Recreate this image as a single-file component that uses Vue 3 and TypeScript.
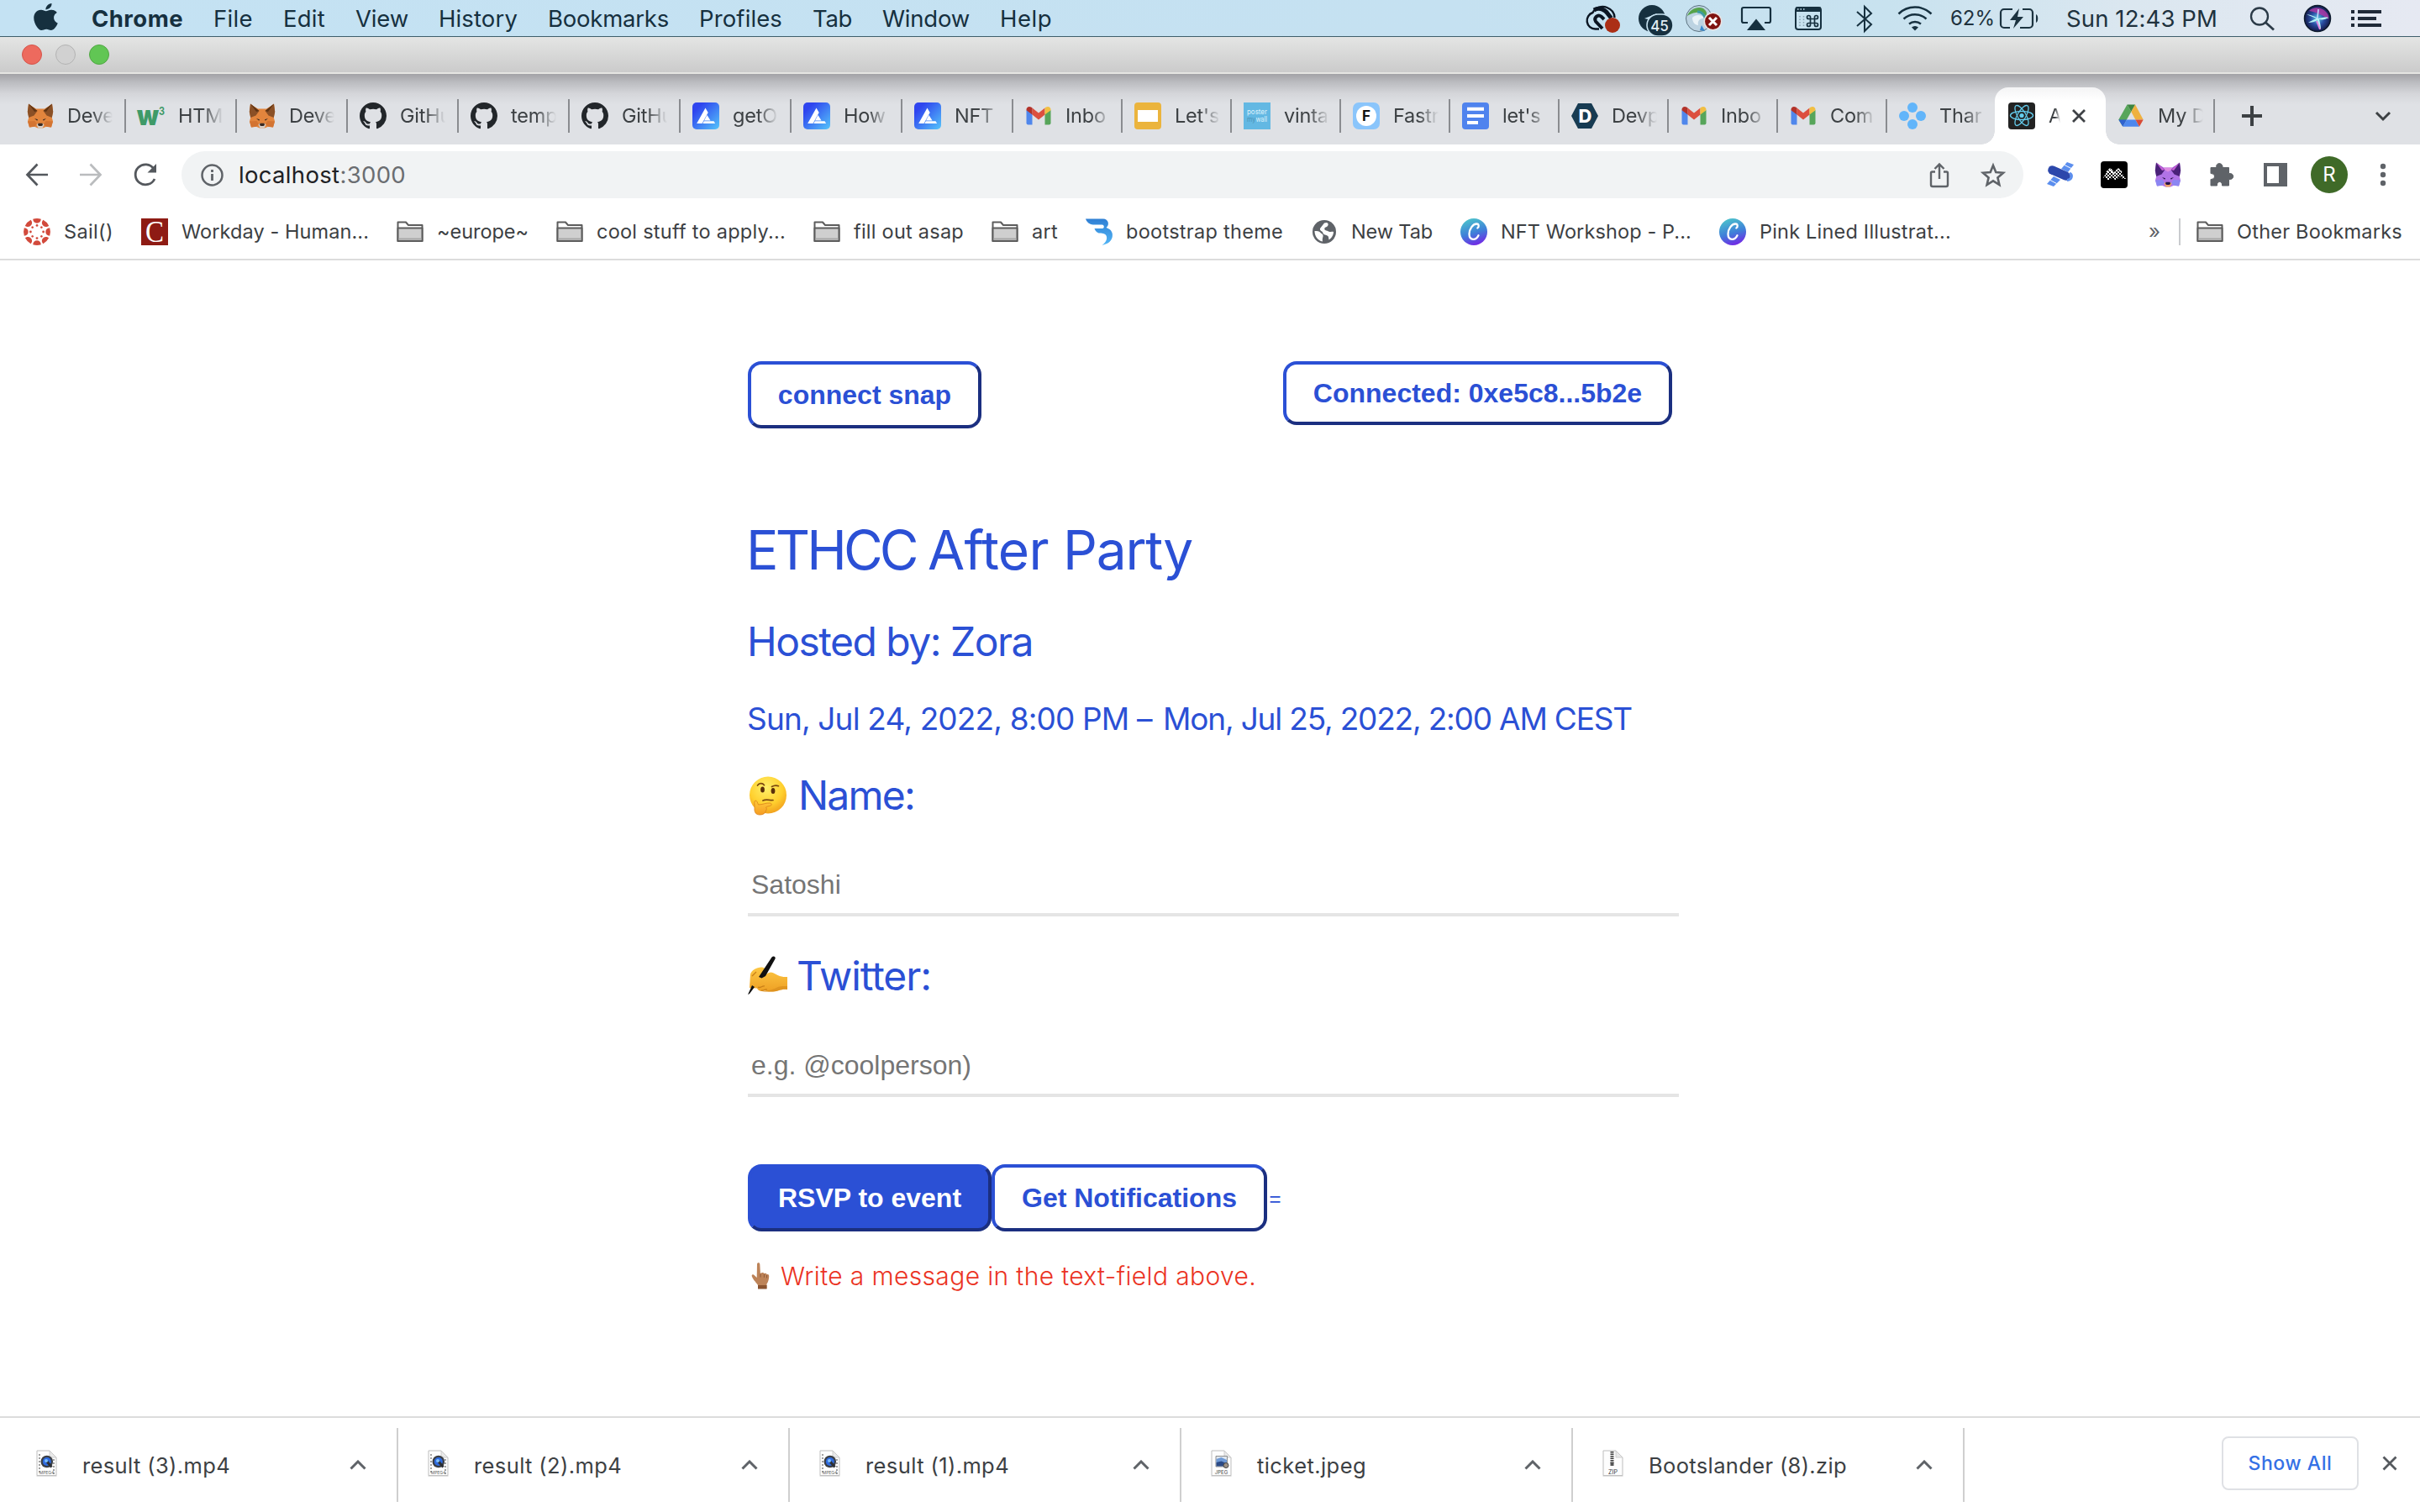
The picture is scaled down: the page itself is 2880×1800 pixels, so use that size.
<script setup lang="ts">
import type { Directive } from 'vue'

interface Tab { icon: string; title: string; kind?: 'narrow' | 'active' }
interface Label { text: string; width: number }
interface Bookmark extends Label { icon: string }
interface Download extends Label { icon: string }

/* Tracks a label so that its advance width equals the given number of pixels. */
const vFit: Directive<HTMLElement, number> = {
  mounted(el, binding) {
    const natural = el.getBoundingClientRect().width
    const count = (el.textContent ?? '').length
    el.style.letterSpacing = `${((binding.value - natural) / count).toFixed(3)}px`
  },
}

const mark = {
  github: 'M8 0C3.58 0 0 3.58 0 8c0 3.54 2.29 6.53 5.47 7.59.4.07.55-.17.55-.38 0-.19-.01-.82-.01-1.49-2.01.37-2.53-.49-2.69-.94-.09-.23-.48-.94-.82-1.13-.28-.15-.68-.52-.01-.53.63-.01 1.08.58 1.23.82.72 1.21 1.87.87 2.33.66.07-.52.28-.87.51-1.07-1.78-.2-3.64-.89-3.64-3.95 0-.87.31-1.59.82-2.15-.08-.2-.36-1.02.08-2.12 0 0 .67-.21 2.2.82.64-.18 1.32-.27 2-.27s1.36.09 2 .27c1.53-1.04 2.2-.82 2.2-.82.44 1.1.16 1.92.08 2.12.51.56.82 1.27.82 2.15 0 3.07-1.87 3.75-3.65 3.95.29.25.54.73.54 1.48 0 1.07-.01 1.93-.01 2.2 0 .21.15.46.55.38A8.01 8.01 0 0 0 16 8c0-4.42-3.58-8-8-8z',
}

const fox = (face: string, side: string, ear: string, earDark: string, nose: string, chin: string) => `
  <path d="M2 2l9 5.500h10L30 2l1.200 9-1.400 7 1.200 4.500-2 7-6-.8-4 1.800h-6l-4-1.800-6 .8-2-7L2.200 18 .8 11z" fill="${face}"/>
  <path d="M1 22.500l8.500-.5 2.500 4-3 2.700-6 .8zM31 22.500l-8.500-.5-2.500 4 3 2.700 6 .8z" fill="${side}"/>
  <path d="M2 1.500l10.500 8.500-4 5.500L2.200 18 .8 11z" fill="${ear}"/>
  <path d="M30 1.500L19.500 10l4 5.500 6.300 2.500 1.400-7z" fill="${ear}"/>
  <path d="M2 1.500l10.500 8.500-3.500 1zM30 1.500L19.500 10l3.500 1z" fill="${earDark}"/>
  <path d="M9 19l4 1.200-.8 1.600zM23 19l-4 1.200.8 1.600z" fill="${nose}"/>
  <path d="M11.500 26.500l1.500-1.500h6l1.500 1.500-2 4h-5z" fill="${chin}"/>
  <path d="M13.500 24.800h5l.5 2.200-1.500 1h-3L13 27z" fill="${nose}"/>`

const canva = `
  <defs><linearGradient id="cv" x1=".3" y1="0" x2=".6" y2="1"><stop offset="0" stop-color="#4cc3cb"/><stop offset=".55" stop-color="#3f7fd9"/><stop offset="1" stop-color="#7326e6"/></linearGradient></defs>
  <circle cx="16" cy="16" r="16" fill="url(#cv)"/>
  <path d="M20.300 11.500c1.800-.6 2.300-5-1-5-4.500 0-8.800 6.500-8.800 12 0 4 2 6.300 4.800 6.300 2.700 0 5-2 6.200-4.600" fill="none" stroke="#fff" stroke-width="2.300" stroke-linecap="round"/>`

const folder = `
  <path d="M1.500 27V4.500h9.500l3 3.500h16.500v19z" fill="#fff" stroke="#5c5c5c" stroke-width="2" stroke-linejoin="round"/>
  <path d="M1.500 11.500h29V27h-29z" fill="#cfcfcf" stroke="#5c5c5c" stroke-width="2" stroke-linejoin="round"/>
  <path d="M2.500 24.500h27" stroke="#a6a6a6" stroke-width="2"/>`

const sail = Array.from({ length: 8 }, (_, i) => `
  <g transform="rotate(${i * 45} 16 16)"><path d="M11.200.8a16 16 0 0 1 9.600 0c-.3 6.500-9.300 6.500-9.600 0z"/><circle cx="16" cy="8.400" r="1.400"/></g>`).join('')

const sheet = (inner: string) => `
  <path d="M1 1h15l8 8v21.500H1z" fill="#fdfdfd" stroke="#bdbdbd" stroke-width="1"/>
  <path d="M.5 31h24" stroke="#c4c4c4"/>
  <path d="M16 1v8h8z" fill="#e9e9e9" stroke="#c6c6c6" stroke-width=".8"/>${inner}`

const icons: Record<string, string> = {
  fox: fox('#e2853d', '#d37432', '#8a5026', '#5f3413', '#3a2a22', '#d8cfc6'),
  purpleFox: fox('#b173e6', '#8b86f2', '#4a2178', '#c35fd6', '#24134a', '#eda36a')
    + '<path d="M11 7.500h10l-1.500 3-3.500 2-3.500-2z" fill="#dd8be2"/>',
  w3: `<text x="-1" y="27" font-family="Inter, sans-serif" font-weight="900" font-size="33" textLength="26" lengthAdjust="spacingAndGlyphs" fill="#3f9a68">w</text>
       <text x="25" y="14.500" font-family="Inter, sans-serif" font-weight="700" font-size="13" textLength="7" lengthAdjust="spacingAndGlyphs" fill="#3f9a68">3</text>`,
  github: `<path transform="scale(2)" d="${mark.github}" fill="#22262a"/>`,
  alchemy: `<defs><linearGradient id="al" x1="0" y1="0" x2="1" y2="1"><stop offset=".2" stop-color="#2f45ef"/><stop offset="1" stop-color="#55c5fa"/></linearGradient></defs>
    <rect width="32" height="32" rx="5" fill="url(#al)"/>
    <path d="M15.500 6.500l3.200 5.600L11.500 25H5.200zM17.500 15l4 6.500h-7.500zM13.800 22.200h11.700l1.600 2.800H12.300z" fill="#fff"/>`,
  gmail: `<path d="M1.500 9v15.500a2 2 0 0 0 2 2h5V13z" fill="#5087ec"/><path d="M30.500 9v15.500a2 2 0 0 1-2 2h-5V13z" fill="#57a55a"/>
    <path d="M8.500 6.500L16 12.500l7.500-6v8L16 20.500l-7.500-6z" fill="#dc4f3f"/><path d="M1.500 8.500C1.500 5 5 4 7.500 5.700l1 .8v8l-7-5.300z" fill="#b2322a"/><path d="M30.500 8.500C30.500 5 27 4 24.500 5.700l-1 .8v8l7-5.300z" fill="#f1bf42"/>`,
  slides: `<rect width="32" height="32" rx="4" fill="#ebb43d"/><rect x="4" y="9" width="24" height="14" fill="#fff"/>`,
  poster: `<rect width="32" height="32" fill="#63b8e3"/><text x="4" y="14" font-family="Inter, sans-serif" font-size="8.500" textLength="24" lengthAdjust="spacingAndGlyphs" fill="#dff2fb">poster</text><text x="4" y="23" font-family="Inter, sans-serif" font-size="8.500" textLength="24" lengthAdjust="spacingAndGlyphs" fill="#dff2fb"><tspan fill="#4b92b5">my</tspan>wall</text>`,
  fast: `<rect width="32" height="32" rx="7" fill="#8ac5fb"/><circle cx="16" cy="16" r="12" fill="#fff"/><text x="16" y="22" text-anchor="middle" font-family="Inter, sans-serif" font-weight="700" font-size="17" fill="#111">F</text>`,
  docs: `<rect width="32" height="32" rx="4" fill="#4f83ee"/><path d="M6 7.800h20M6 16h20M6 24h13" stroke="#fff" stroke-width="4"/>`,
  devpost: `<path d="M8 1h16l8 15-8 15H8L0 16z" fill="#173b52"/><text x="16.500" y="24" text-anchor="middle" font-family="Inter, sans-serif" font-weight="800" font-size="22" fill="#fff">D</text>`,
  thanks: `<g fill="#62b5fa"><circle cx="16" cy="6" r="6"/><circle cx="16" cy="26" r="6"/><circle cx="6" cy="16" r="6"/><circle cx="26" cy="16" r="6"/></g>`,
  react: `<rect width="32" height="32" rx="4" fill="#222"/><g fill="none" stroke="#64cdee" stroke-width="1.300"><ellipse cx="16" cy="15.500" rx="13.500" ry="5"/><ellipse cx="16" cy="15.500" rx="13.500" ry="5" transform="rotate(60 16 15.500)"/><ellipse cx="16" cy="15.500" rx="13.500" ry="5" transform="rotate(120 16 15.500)"/></g><circle cx="16" cy="15.500" r="2.600" fill="#64cdee"/>`,
  drive: `<path d="M11.500 2.500L1.300 20.500l5 8L16.300 11z" fill="#57a55a"/><path d="M11.500 2.500h9.600L16.300 11z" fill="#3d8540"/><path d="M21.100 2.500L30.700 20.500h-9.300L16.300 11z" fill="#efb13f"/><path d="M1.300 20.500h9.600l-4.600 8.300z" fill="#2f62cf"/><path d="M10.900 20.500h10.500l4.600 8.300H6.300z" fill="#4c87ee"/><path d="M21.400 20.500h9.300L26 28.800z" fill="#d94b35"/>`,
  sail: `<g fill="#d24a3c">${sail}</g>`,
  workday: `<rect width="32" height="32" fill="#8e1b14"/><text x="16" y="28" text-anchor="middle" font-family="'Liberation Serif', serif" font-size="36" textLength="22" lengthAdjust="spacingAndGlyphs" fill="#fff">C</text>`,
  folder,
  bootstrap: `<defs><linearGradient id="bs" x1="0" y1="0" x2="0" y2="1"><stop offset="0" stop-color="#2f7fd4"/><stop offset="1" stop-color="#52b6f6"/></linearGradient></defs>
    <path d="M0 .5h21c6 0 8 7 3.500 10.500C31 13 33 18 31.500 23c-1.200 4.500-5.500 7.500-12 9 4.500-3.500 6-6.500 5.500-10-.6-3.500-4-4.500-8.500-4.500-2.500 0-5-2.500-6-5.500h9.500c2.500 0 2.500-4.500-.5-4.500H9C4 7 1 4 0 .5z" fill="url(#bs)"/>`,
  globe: `<circle cx="16" cy="16" r="14" fill="#5f6368"/><path d="M4.500 15c3 0 5.500 0 6.500 1.500 1.200 1.800 3 1.500 3.500 3.500.4 2-1.200 3.500-.5 7.500-5.500-1-9.500-6-9.500-12.500zM16 5.500l3-.5c2 1 2 2.500 1 4-1.200 1.700-3.500 1.200-3.700 3.200s1.700 2 3.200 2.500 2.500 1.700 4.500 1.200c1.300-.3 2.200-.4 3 .1 0 4-2.500 7.500-5.500 9.500-.5-2.500 0-4-2-5-2.500-1.200-4.500-1-5.200-3.500-.5-2-4-2-3.300-5" fill="#fff"/>`,
  canva,
  movie: sheet(`<path d="M4 5v24M21 11v18" stroke="#8a8a8a" stroke-width="1.600" stroke-dasharray="2 2"/><circle cx="12.800" cy="14" r="7.300" fill="#3b3f45"/><circle cx="12.800" cy="14" r="5" fill="#2f6be0"/><path d="M12.500 13.500l6 7" stroke="#2c2f34" stroke-width="3"/><circle cx="12" cy="13" r="2" fill="#7cc0ff"/><text x="12.500" y="28.500" text-anchor="middle" font-family="Inter, sans-serif" font-size="5" fill="#666">MPEG4</text>`),
  jpeg: sheet(`<path d="M6 7.500h13.500V20H6z" fill="#dfe6ee" stroke="#777" stroke-width=".8"/><path d="M6.500 11l6-2 6.500 3v3H6.500z" fill="#6f9ad6"/><path d="M6.500 15l6-1.500 6 2.500v3.500h-12z" fill="#2b4a86"/><circle cx="18" cy="18.500" r="3" fill="#9c9186" stroke="#444"/><text x="12.500" y="28.500" text-anchor="middle" font-family="Inter, sans-serif" font-size="6" fill="#444">JPEG</text>`),
  zip: sheet(`<path d="M11.500 2v15" stroke="#3c3c3c" stroke-width="4" stroke-dasharray="1.500 1"/><path d="M9.500 15h4v4h-4z" fill="#555"/><text x="12.500" y="28.500" text-anchor="middle" font-family="Inter, sans-serif" font-size="7" fill="#333">ZIP</text>`),
}

const menus: Label[] = [
  { text: 'Chrome', width: 109 }, { text: 'File', width: 47 }, { text: 'Edit', width: 50 },
  { text: 'View', width: 63 }, { text: 'History', width: 94 }, { text: 'Bookmarks', width: 144 },
  { text: 'Profiles', width: 99 }, { text: 'Tab', width: 47 }, { text: 'Window', width: 104 }, { text: 'Help', width: 62 },
]

const tabs: Tab[] = [
  { icon: 'fox', title: 'Deve' }, { icon: 'w3', title: 'HTM' }, { icon: 'fox', title: 'Deve' },
  { icon: 'github', title: 'GitHu' }, { icon: 'github', title: 'temp' }, { icon: 'github', title: 'GitHu' },
  { icon: 'alchemy', title: 'getO' }, { icon: 'alchemy', title: 'How' }, { icon: 'alchemy', title: 'NFT' },
  { icon: 'gmail', title: 'Inbo', kind: 'narrow' }, { icon: 'slides', title: "Let's", kind: 'narrow' },
  { icon: 'poster', title: 'vinta', kind: 'narrow' }, { icon: 'fast', title: 'Fastr', kind: 'narrow' },
  { icon: 'docs', title: "let's", kind: 'narrow' }, { icon: 'devpost', title: 'Devp', kind: 'narrow' },
  { icon: 'gmail', title: 'Inbo', kind: 'narrow' }, { icon: 'gmail', title: 'Com', kind: 'narrow' },
  { icon: 'thanks', title: 'Thar', kind: 'narrow' }, { icon: 'react', title: 'A', kind: 'active' },
  { icon: 'drive', title: 'My D', kind: 'narrow' },
]

const bookmarks: Bookmark[] = [
  { icon: 'sail', text: 'Sail()', width: 59 }, { icon: 'workday', text: 'Workday - Human...', width: 223 },
  { icon: 'folder', text: '~europe~', width: 109 }, { icon: 'folder', text: 'cool stuff to apply...', width: 225 },
  { icon: 'folder', text: 'fill out asap', width: 131 }, { icon: 'folder', text: 'art', width: 31 },
  { icon: 'bootstrap', text: 'bootstrap theme', width: 187 }, { icon: 'globe', text: 'New Tab', width: 97 },
  { icon: 'canva', text: 'NFT Workshop - P...', width: 227 }, { icon: 'canva', text: 'Pink Lined Illustrat...', width: 228 },
]

const downloads: Download[] = [
  { icon: 'movie', text: 'result (3).mp4', width: 176 }, { icon: 'movie', text: 'result (2).mp4', width: 176 },
  { icon: 'movie', text: 'result (1).mp4', width: 171 }, { icon: 'jpeg', text: 'ticket.jpeg', width: 130 },
  { icon: 'zip', text: 'Bootslander (8).zip', width: 236 },
]
</script>

<template>
  <div class="screen">
    <header class="menubar">
      <svg class="apple" viewBox="0 0 24 24" preserveAspectRatio="none"><path fill="#16303f" d="M12.152 6.896c-.948 0-2.415-1.078-3.960-1.040-2.040.027-3.910 1.183-4.961 3.014-2.117 3.675-.546 9.103 1.519 12.090 1.013 1.454 2.208 3.090 3.792 3.039 1.520-.065 2.090-.987 3.935-.987 1.831 0 2.350.987 3.960.948 1.637-.026 2.676-1.480 3.676-2.948 1.156-1.688 1.636-3.325 1.662-3.415-.039-.013-3.182-1.221-3.220-4.857-.026-3.040 2.480-4.494 2.597-4.559-1.429-2.090-3.623-2.324-4.390-2.376-2-.156-3.675 1.090-4.610 1.090zM15.530 3.830c.843-1.012 1.400-2.427 1.245-3.830-1.207.052-2.662.805-3.532 1.818-.780.896-1.454 2.338-1.273 3.714 1.338.104 2.715-.688 3.559-1.701" /></svg>
      <nav class="menus">
        <span v-for="m in menus" :key="m.text" v-fit="m.width">{{ m.text }}</span>
      </nav>
      <div class="status">
        <svg width="60" height="43" viewBox="1880 0 60 43">
          <g fill="none" stroke="#0b1522" stroke-width="2.400">
            <path d="M1903 34.500h-4.500a10 10 0 0 1-3-19.500c3-6.500 11-8.500 17-6 5 2 9 6 9 12" />
            <path d="M1897 12c6-3.500 13-1 16.500 4.500l4 5" stroke-width="5" />
            <path d="M1907 34l-8-8.500a4.500 4.500 0 0 1 6.500-6l3.500 3.500" stroke-width="4" />
          </g>
          <circle cx="1919" cy="30" r="9" fill="#ab2e16" />
        </svg>
        <svg width="58" height="43" viewBox="1940 0 58 43">
          <circle cx="1966" cy="22" r="16" fill="#16303f" />
          <path d="M1957 22l15-6-6 8z" fill="#c7e2f0" />
          <rect x="1960" y="17" width="31" height="26" rx="13" fill="#16303f" stroke="#c7e2f0" stroke-width="1.600" />
          <text x="1975" y="36.500" text-anchor="middle" font-family="Inter, sans-serif" font-size="17" font-weight="500" fill="#e2eef5">45</text>
        </svg>
        <svg width="63" height="43" viewBox="1998 0 63 43">
          <circle cx="2022" cy="22" r="15.500" fill="#bcd3e2" stroke="#5d7380" />
          <path d="M2008 19c3-8 12-12 19-9 4 3 5 6 3 9-3-4-7-5-12-4-4 .5-7 2-10 4z" fill="#56a34a" />
          <path d="M2014 21c4-4 11-4 15 1-6-1-9 3-8 8-4 0-7-4-7-9z" fill="#eaf3f8" /><path d="M2020 14c5 0 9 4 10 10" stroke="#3c9aa0" stroke-width="3" fill="none" />
          <path d="M2025 30l4 7-6-1z" fill="#3688cf" />
          <circle cx="2038.500" cy="25.500" r="10.200" fill="#801310" stroke="#e9e4e4" stroke-width="1.500" />
          <path d="M2034 21l9 9m0-9l-9 9" stroke="#fff" stroke-width="3" />
        </svg>
        <svg width="61" height="43" viewBox="2061 0 61 43">
          <path d="M2080 27h-5a2 2 0 0 1-2-2V11a2 2 0 0 1 2-2h30a2 2 0 0 1 2 2v14a2 2 0 0 1-2 2h-5" fill="none" stroke="#16303f" stroke-width="2.200" />
          <path d="M2090 22.500l11 13.500h-22z" fill="#16303f" />
        </svg>
        <svg width="67" height="43" viewBox="2122 0 67 43">
          <rect x="2137" y="9" width="30" height="26" rx="3" fill="none" stroke="#16303f" stroke-width="2" />
          <path d="M2137 8.500h30V14h-30z" fill="#16303f" /><path d="M2139 11h10" stroke="#c9e2ef" stroke-width="1.500" stroke-dasharray="1.500 2" />
          <path d="M2142 19v12M2146.500 19v12" stroke="#16303f" opacity=".35" stroke-width="1.500" stroke-dasharray="1.500 2" />
          <path d="M2154.500 22.500h5v5h-5zM2154.500 22.500v-2a2 2 0 1 0-2 2zM2159.500 22.500v-2a2 2 0 1 1 2 2zM2154.500 27.500v2a2 2 0 1 1-2-2zM2159.500 27.500v2a2 2 0 1 0 2-2z" fill="none" stroke="#16303f" stroke-width="1.700" />
        </svg>
        <svg width="54" height="43" viewBox="2189 0 54 43"><path d="M2210 14l17 15-8 8V8l8 8-17 15" fill="none" stroke="#16303f" stroke-width="2" /></svg>
        <svg width="73" height="43" viewBox="2243 0 73 43">
          <g fill="none" stroke="#16303f" stroke-width="2.500"><path d="M2259.500 16.500a28 28 0 0 1 39 0M2265.500 22.500a20 20 0 0 1 27 0M2272 28.500a11.500 11.500 0 0 1 14 0" /></g>
          <path d="M2275 32.500a6 6 0 0 1 8 0L2279 36.500z" fill="#16303f" />
        </svg>
        <span class="small-text" v-fit="53">62%</span>
        <svg width="85" height="43" viewBox="2374 0 85 43">
          <path d="M2395 11h-10a4 4 0 0 0-4 4v14a4 4 0 0 0 4 4h7M2407 11h8a4 4 0 0 1 4 4v14a4 4 0 0 1-4 4h-11" fill="none" stroke="#1c3340" stroke-width="2.200" />
          <path d="M2423 17v10c3-1 3-9 0-10zM2403 10l-11 14h7l-3 10 12-14h-7z" fill="#1c3340" />
        </svg>
        <span v-fit="180">Sun 12:43 PM</span>
        <svg width="86" height="43" viewBox="2639 0 86 43"><circle cx="2689" cy="19.500" r="10" fill="none" stroke="#2b3a47" stroke-width="2.300" /><path d="M2696 26.500l10 9" stroke="#2b3a47" stroke-width="2.800" /></svg>
        <svg width="61" height="43" viewBox="2725 0 61 43">
          <defs><radialGradient id="siri"><stop offset="0" stop-color="#5fd0e8" /><stop offset=".5" stop-color="#2a4fa5" /><stop offset="1" stop-color="#141a4a" /></radialGradient></defs>
          <circle cx="2758" cy="22" r="15.500" fill="url(#siri)" stroke="#0d1a2c" stroke-width="1.500" />
          <path d="M2748 13c5-5 14-5 20 1 3 3 4 6 3 9-5-4-13-8-23-10z" fill="#b43aa8" opacity=".8" />
          <path d="M2745 17c7 1 12 4 14 5 5-1 9-2 12-1-3 2-7 3-11 2 1 4 2 8 2 12-2-3-4-7-4-11-3 2-7 3-11 3 3-2 7-4 10-5-4-2-9-3-12-5z" fill="#b8f4f4" />
          <path d="M2759 11c0 4-1 7-1 11" stroke="#c8d8ff" stroke-width="1.600" /><path d="M2757 25l4 10" stroke="#e08ae2" stroke-width="2" />
        </svg>
        <svg width="94" height="43" viewBox="2786 0 94 43"><path d="M2798 14h4M2798 22h4M2798 30h4M2806 14h28M2806 22h22M2806 30h28" stroke="#202a38" stroke-width="4" /></svg>
      </div>
    </header>

    <div class="titlebar"><i class="light close"></i><i class="light min"></i><i class="light max"></i></div>

    <div class="tabstrip">
      <div v-for="(t, i) in tabs" :key="i" class="tab" :class="t.kind">
        <svg class="favicon" viewBox="0 0 32 32" v-html="icons[t.icon]"></svg>
        <span class="tab-title">{{ t.title }}</span>
        <svg v-if="t.kind === 'active'" class="tab-close" viewBox="0 0 16 16"><path d="M1 1l14 14M15 1L1 15" stroke="#3f4246" stroke-width="2.800" /></svg>
      </div>
      <svg class="new-tab" width="88" height="68" viewBox="2636 104 88 68"><path d="M2668 138h24M2680 126v24" stroke="#3c4043" stroke-width="4" /></svg>
      <svg width="88" height="68" viewBox="2792 104 88 68"><path d="M2828 134l8 8 8-8" fill="none" stroke="#3c4043" stroke-width="3" /></svg>
    </div>

    <div class="toolbar">
      <svg width="76" height="72" viewBox="0 172 76 72"><path d="M57 208H33M44.500 195.500L32.500 208l12 12.500" fill="none" stroke="#54585d" stroke-width="2.700" /></svg>
      <svg width="64" height="72" viewBox="76 172 64 72"><path d="M95 208h24M107.500 195.500l12 12.500-12 12.500" fill="none" stroke="#babcbe" stroke-width="2.700" /></svg>
      <svg width="76" height="72" viewBox="140 172 76 72"><path d="M183 201a12 12 0 1 0 1 12" fill="none" stroke="#54585d" stroke-width="2.800" /><path d="M186 195v10.500h-10.500z" fill="#54585d" /></svg>
      <div class="omnibox">
        <svg width="68" height="56" viewBox="216 180 68 56"><circle cx="252.500" cy="208.500" r="12" fill="none" stroke="#5f6368" stroke-width="2.500" /><path d="M252.500 207v8M252.500 202v3" stroke="#5f6368" stroke-width="2.800" /></svg>
        <span class="url" v-fit="199">localhost<em>:3000</em></span>
        <svg class="push" width="64" height="56" viewBox="2276 180 64 56"><path d="M2303 204.500h-3.500a1.500 1.500 0 0 0-1.500 1.500v14a2 2 0 0 0 2 2h16a2 2 0 0 0 2-2v-14a1.500 1.500 0 0 0-1.500-1.500h-3.500M2308 213v-17M2302.500 201l5.500-5.500 5.500 5.500" fill="none" stroke="#5f6368" stroke-width="2.400" /></svg>
        <svg width="68" height="56" viewBox="2340 180 68 56"><path d="M2372 197l3.300 8 8.700.7-6.600 5.700 2 8.600-7.400-4.600-7.400 4.600 2-8.600-6.600-5.700 8.700-.7z" fill="none" stroke="#5f6368" stroke-width="2.600" /></svg>
      </div>
      <svg width="76" height="72" viewBox="2408 172 76 72">
        <path d="M2453 201l7-8 8 3-7 9zM2436 219l8-9 8 4-8 8z" fill="#5b8eee" /><path d="M2457 196.500l8 4M2440 214.500l7.500 4" stroke="#fff" stroke-width="1" />
        <path d="M2442.500 202.500l16 7" stroke="#2c47ab" stroke-width="10.500" stroke-linecap="round" /><path d="M2463 206c4 2 3 8-3 8.500" stroke="#5b8eee" stroke-width="3" fill="none" />
      </svg>
      <svg width="64" height="72" viewBox="2484 172 64 72">
        <defs><pattern id="check" width="4" height="4" patternUnits="userSpaceOnUse"><path d="M0 0h2v2H0zM2 2h2v2H2z" fill="#fff" /></pattern></defs>
        <rect x="2500" y="192" width="32" height="32" rx="4" fill="#000" />
        <path d="M2502 213l8-12h3l3 4 3-4h3l8 12h-4l-3-3-4 4h-2l-3-3-3 3h-3l-3-4-3 3z" fill="url(#check)" />
        <path d="M2507 205l4-4 5 6 5-6 4 4" fill="none" stroke="#fff" stroke-width="1.500" stroke-dasharray="2.500 1" />
      </svg>
      <svg width="64" height="72" viewBox="2548 172 64 72"><svg x="2564" y="192" width="32" height="32" viewBox="0 0 32 32" v-html="icons.purpleFox"></svg></svg>
      <svg width="64" height="72" viewBox="2612 172 64 72"><path d="M2631 199.500h7c-2-6.500 8-6.500 7 0h7.500v7c7-1 7 8 0 7v7.500h-8c1-6-7-6-6 0h-7.500v-7.500c6 0 6-7 0-7z" fill="#5f6368" stroke="#5f6368" stroke-linejoin="round" /></svg>
      <svg width="64" height="72" viewBox="2676 172 64 72"><path fill-rule="evenodd" d="M2694 194h28v28h-28zM2698 198v20h14v-20z" fill="#5f6368" /></svg>
      <span class="avatar">R</span>
      <svg width="66" height="72" viewBox="2814 172 66 72"><g fill="#5f6368"><circle cx="2836" cy="198" r="3.200" /><circle cx="2836" cy="208" r="3.200" /><circle cx="2836" cy="218" r="3.200" /></g></svg>
    </div>

    <div class="bookmarks">
      <div v-for="b in bookmarks" :key="b.text" class="bookmark">
        <svg class="favicon" viewBox="0 0 32 32" v-html="icons[b.icon]"></svg><span v-fit="b.width">{{ b.text }}</span>
      </div>
      <span class="more">»</span>
      <div class="bookmark other">
        <svg class="favicon" viewBox="0 0 32 32" v-html="icons.folder"></svg><span v-fit="197">Other Bookmarks</span>
      </div>
    </div>

    <main class="page">
      <div class="form">
        <div class="wallet-row">
          <button class="btn snap">connect snap</button>
          <button class="btn wallet">Connected: 0xe5c8...5b2e</button>
        </div>
        <h1><span v-fit="216">ETHCC&nbsp;</span><span v-fit="161">After&nbsp;</span><span v-fit="154">Party</span></h1>
        <h2><span v-fit="340">Hosted by: Zora</span></h2>
        <h3><span v-fit="464">Sun, Jul 24, 2022, 8:00 PM&nbsp;</span><span v-fit="31">–&nbsp;</span><span v-fit="558">Mon, Jul 25, 2022, 2:00 AM CEST</span></h3>
        <h2 class="field-label">
          <svg class="emoji" viewBox="0 0 48 48">
            <defs>
              <radialGradient id="face" cx=".45" cy=".3" r=".75"><stop offset="0" stop-color="#fff06a" /><stop offset=".6" stop-color="#ffd02e" /><stop offset="1" stop-color="#f09a1c" /></radialGradient>
              <linearGradient id="hand" x1="0" y1="0" x2="0" y2="1"><stop offset="0" stop-color="#ffca3c" /><stop offset="1" stop-color="#f59c22" /></linearGradient>
            </defs>
            <circle cx="24" cy="23.500" r="22" fill="url(#face)" />
            <ellipse cx="17.500" cy="17" rx="2.400" ry="3.600" fill="#5a2f0b" /><ellipse cx="30" cy="18.500" rx="2.400" ry="3.600" fill="#5a2f0b" />
            <path d="M11.500 12c2-3 6-3 8-.3M28.500 13.500c2.500-1.500 5.500-1.800 8-.8M18 30c4-2 8 0 12-.5" fill="none" stroke="#7d4a10" stroke-width="1.700" stroke-linecap="round" />
            <path d="M9 30c2 0 2.500 3 3.500 5 5 0 9-2.500 14-2 2.500.4 2.200 3 0 3.400-2.500.6-4 .8-5 1.600 1.500 1.500.5 3 0 4-.7 3-3 5-7 5-5 0-7-3-6.500-8C8.200 36 7 31 9 30z" fill="url(#hand)" stroke="#d9821a" stroke-width=".8" />
          </svg>
          <span v-fit="138">Name:</span>
        </h2>
        <input type="text" placeholder="Satoshi" />
        <h2 class="field-label twitter">
          <svg class="emoji" viewBox="0 0 48 48">
            <defs><linearGradient id="writer" x1="0" y1="0" x2="0" y2="1"><stop offset="0" stop-color="#fdc844" /><stop offset="1" stop-color="#eea024" /></linearGradient></defs>
            <path d="M3 22c1-5 8-9 14-8.500 3 .3 4 2 4 3.500l-4 7 8-4c4-2 8 2 13 4 3 1 6 1 9 1v15c-8-1-10 2.500-17 2.500-4 0-6 0-10-1-4 1-8 0-9-3L2 38z" fill="url(#writer)" />
            <path d="M12 37c3 2 5-2 8-1M16 41c3 1 4-2 7-1M5 24l5-5" stroke="#c97f17" stroke-width="1.300" fill="none" />
            <path d="M14 41c8 2 16-1 22-4 4-1.500 8-1 11-1v4c-8-1-11 2.500-17 2.500-6 0-12 1-16-1.500z" fill="#d98d1c" opacity=".7" />
            <path d="M28.500 1.500c2-2 5-.5 4 2L21 24l-4.500 2.500L13 25zM5 35l3 2-6 8-2 1z" fill="#111" />
          </svg>
          <span v-fit="160">Twitter:</span>
        </h2>
        <input type="text" placeholder="e.g. @coolperson)" />
        <div class="actions">
          <button class="btn solid">RSVP to event</button><button class="btn notify">Get Notifications</button><span class="equals">=</span>
        </div>
        <p class="hint">
          <svg class="point" viewBox="0 0 22 32"><path d="M7 2c0-2.400 3.300-2.400 3.300 0l.6 11c2-1.500 4-1 4.500.3 1.300-1 3-.3 3.200.9 1.500-.6 2.600.3 2.600 1.800 0 4-1 7-2.700 9.500V31H8v-4C6 24 2 20 .8 16.500c-.6-2 1.500-3 3-1.200L6.700 18z" fill="#bd8358" /><path d="M8 27h10.500v4.500H8z" fill="#8a5330" /><path d="M11 13.500v4M15.400 13.800v4M18.500 15v3.500" stroke="#8f5a38" stroke-width="1" /></svg>
          <span v-fit="566">Write a message in the text-field above.</span>
        </p>
      </div>
    </main>

    <footer class="downloads">
      <div v-for="d in downloads" :key="d.text" class="download">
        <svg class="file" viewBox="0 0 25 32" v-html="icons[d.icon]"></svg>
        <span v-fit="d.width">{{ d.text }}</span>
        <svg class="caret" viewBox="0 0 20 12"><path d="M1.500 10.500L10 2l8.500 8.500" fill="none" stroke="#5f6368" stroke-width="3" /></svg>
      </div>
      <button class="show-all"><span v-fit="100">Show All</span></button>
      <svg class="dismiss" viewBox="0 0 18 18"><path d="M1.500 1.500l15 15M16.500 1.500l-15 15" stroke="#55595e" stroke-width="2.800" /></svg>
    </footer>
  </div>
</template>

<style>
body { margin: 0; background: #fff; overflow: hidden; }
</style>

<style scoped>
.screen { width: 2880px; height: 1800px; display: flex; flex-direction: column; font-family: Inter, "Liberation Sans", sans-serif; color: #3c4043; overflow: hidden; background: #fff; }
svg { display: block; flex: none; }
span { white-space: nowrap; }

.menubar { box-sizing: border-box; height: 44px; flex: none; display: flex; align-items: center; padding-left: 37px; background: linear-gradient(90deg, #c4e2f3 0, #c5e1f1 60%, #c8e2ef 78%, #dbe7f0 88%, #e6e9f2 100%); border-bottom: 1px solid #3e5e6b; color: #16303f; font-size: 27.500px; }
.apple { width: 35px; height: 32px; margin-bottom: 3px; }
.menus { display: flex; gap: 36px; margin-left: 37px; }
.menus span:first-child { font-weight: 700; }
.status { display: flex; align-items: center; margin-left: auto; color: #20323e; }
.small-text { margin-left: 5px; font-size: 24px; }

.titlebar { box-sizing: border-box; height: 44px; flex: none; display: flex; align-items: center; gap: 16px; padding-left: 26px; background: linear-gradient(#e4e5e4, #cbcbcb); border-bottom: 2px solid #e5e5e2; }
.light { box-sizing: border-box; width: 24px; height: 24px; border-radius: 50%; }
.close { background: #ed6a5e; border: 1px solid #d5544a; }
.min { background: #d1d1d1; border: 1px solid #b3b3b3; }
.max { background: #61c654; border: 1px solid #50a743; }

.tabstrip { box-sizing: border-box; height: 84px; flex: none; display: flex; align-items: flex-end; padding-left: 18px; background: linear-gradient(#a2a2a6 0, #bbbcc0 10px, #d4d5d9 23px, #dfe1e5 36px); }
.tab { box-sizing: border-box; width: 132px; height: 68px; flex: none; display: flex; align-items: center; padding-left: 14px; position: relative; }
.tab::after { content: ""; width: 2px; height: 40px; margin-left: auto; background: #8a8c90; }
.tab.narrow { width: 130px; }
.tab.narrow:has(+ .active)::after { visibility: hidden; }
.favicon { width: 32px; height: 32px; overflow: visible; }
.tab-title { width: 54px; margin-left: 16px; overflow: hidden; font-size: 23.500px; letter-spacing: -.2px; line-height: 32px; -webkit-mask-image: linear-gradient(90deg, #000 55%, transparent 100%); mask-image: linear-gradient(90deg, #000 55%, transparent 100%); }
.tab.active { background: linear-gradient(#f4f4f5, #fff 16px); border-radius: 16px 16px 0 0; width: 132px; margin-left: -2px; padding-left: 16px; }
.active .tab-title { width: 14px; }
.tab.active::after, .tab.active::before { content: ""; position: absolute; bottom: 0; width: 16px; height: 16px; margin: 0; }
.tab.active::before { left: -16px; background: radial-gradient(circle at 0 0, transparent 15.500px, #fff 16px); }
.tab.active::after { right: -16px; background: radial-gradient(circle at 100% 0, transparent 15.500px, #fff 16px); }
.tab-close { width: 16px; height: 16px; margin-left: 14px; }
.new-tab { margin-right: auto; }

.toolbar { height: 72px; flex: none; display: flex; align-items: center; }
.omnibox { width: 2192px; height: 56px; flex: none; display: flex; align-items: center; border-radius: 28px; background: #f1f3f4; }
.url { font-size: 27.500px; color: #202124; }
.url em { font-style: normal; color: #6a6d71; }
.push { margin-left: auto; }
.avatar { width: 44px; height: 44px; margin: 0 10px; margin-right: 20px; border-radius: 50%; background: #3f6a28; color: #fff; font-size: 24px; line-height: 44px; text-align: center; }

.bookmarks { box-sizing: border-box; height: 66px; flex: none; display: flex; align-items: center; gap: 33px; padding: 0 21px 0 28px; border-bottom: 2px solid #dcdcdc; font-size: 23.500px; }
.bookmark { display: flex; align-items: center; gap: 16px; flex: none; }
.bookmark span { margin-top: -2px; }
.more { margin-left: auto; margin-right: -11px; font-size: 24px; line-height: 32px; color: #5f6368; }
.other { border-left: 2px solid #c9cbce; padding-left: 19px; }

.page { height: 1376px; flex: none; padding: 120px 0 0 890px; box-sizing: border-box; color: #2b50d5; }
.form { width: 1108px; }
.wallet-row { width: 1100px; height: 80px; display: flex; justify-content: space-between; align-items: flex-start; }
.btn { box-sizing: border-box; height: 80px; padding: 0; border: 4px solid; border-color: #2b50d5 #1b2f80 #1b2f80 #2b50d5; border-radius: 16px; background: #fff; color: #2b50d5; font: 700 32px "Liberation Sans", Arial, sans-serif; white-space: nowrap; }
.snap { width: 278px; }
.wallet { width: 463px; height: 76px; }
.solid { width: 290px; background: #2b50d5; color: #fff; }
.notify { width: 328px; }
h1, h2, h3 { margin: 0; font-weight: 440; display: flex; align-items: center; }
h1 { height: 80px; margin-top: 104px; font-size: 64px; font-variant-ligatures: none; }
h2 { height: 60px; margin-top: 39.500px; font-size: 48px; }
h3 { height: 50px; margin-top: 36.500px; font-size: 37px; font-weight: 400; }
h1 span:first-child { margin-left: -2px; }
h2 span, h3 span:first-child { margin-left: -1px; }
.field-label { margin-top: 36.500px; }
.field-label.twitter { margin-top: 40.500px; }
.emoji { width: 48px; height: 48px; margin-right: 13px; }
.twitter .emoji { margin-right: 11px; }
input { display: block; box-sizing: border-box; width: 1108px; height: 73px; margin-top: 41.500px; padding: 1px 0 0 4px; border: 0; border-bottom: 4px solid #e5e5e5; background: transparent; outline: none; font: 32px "Liberation Sans", Arial, sans-serif; }
input::placeholder { color: #757575; opacity: 1; }
.actions { display: flex; align-items: center; height: 80px; margin-top: 80px; }
.equals { font-size: 29px; font-weight: 300; margin: -2px 0 0; }
.hint { display: flex; align-items: center; height: 40px; margin: 33px 0 0; padding-left: 4px; color: #eb3323; font-size: 30px; font-weight: 300; }
.point { width: 22px; height: 32px; margin-right: 13px; }

.downloads { box-sizing: border-box; height: 114px; flex: none; display: flex; align-items: flex-start; padding: 12px 0 0 8px; border-top: 2px solid #dcdcdc; font-size: 25.500px; }
.download { box-sizing: border-box; width: 466px; height: 88px; flex: none; display: flex; align-items: center; padding: 0 36px 0 35px; border-right: 2px solid #cfcfcf; }
.file { width: 25px; height: 32px; margin: -4px 30px 0 0; }
.caret { width: 20px; height: 12px; margin-left: auto; }
.show-all { box-sizing: border-box; width: 163px; height: 64px; margin: 10px 0 0 auto; padding: 0; border: 2px solid #dfe1e5; border-radius: 8px; background: #fff; color: #3471e6; font: 500 23px Inter, sans-serif; }
.dismiss { width: 18px; height: 18px; margin: 33px 27px 0 28px; }
</style>
